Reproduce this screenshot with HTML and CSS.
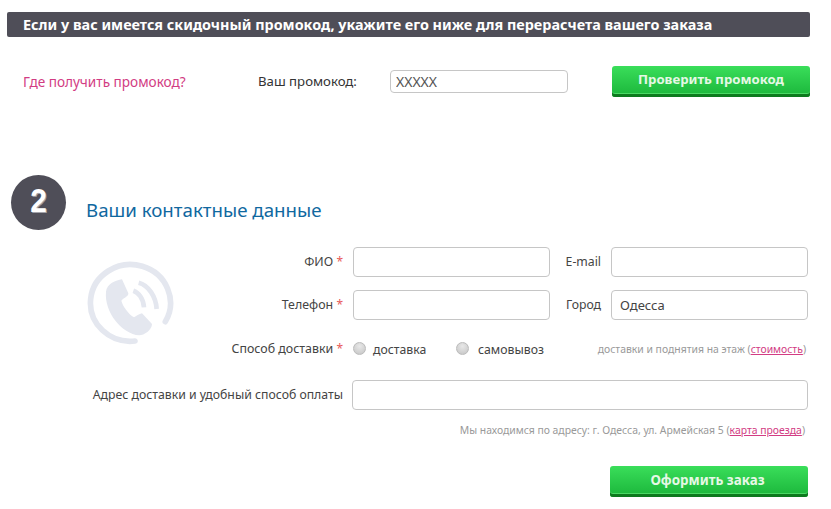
FILE: index.html
```html
<!DOCTYPE html>
<html lang="ru">
<head>
<meta charset="utf-8">
<title>Заказ</title>
<link rel="stylesheet" href="styles.css">
</head>
<body>
<main class="page">
  <h2 class="bar">Если у вас имеется скидочный промокод, укажите его ниже для перерасчета вашего заказа</h2>
  <div class="promo">
    <a class="promo-link" href="#">Где получить промокод?</a>
    <label class="promo-label">Ваш промокод:</label>
    <input class="field promo-input" value="XXXXX">
    <button class="btn promo-btn" type="button">Проверить промокод</button>
  </div>
  <div class="step-head">
    <div class="step-num"><span class="step-shadow">2</span><span class="step-digit">2</span></div>
    <h3 class="step-title">Ваши контактные данные</h3>
  </div>
  <form class="grid">
    <svg class="phone" width="100" height="90" viewBox="0 0 300 270">
      <path class="ring" d="M165 243A120 115 0 1 1 256 185"/>
      <path class="handset" d="M78 95C80 72 108 60 126 58L145 100C146 110 130 114 124 122C128 138 145 162 162 172C168 168 178 162 186 160L216 192C216 210 192 226 178 226C125 222 72 155 78 95Z"/>
      <path class="wave" d="M160 92C175 97 190 115 192 142"/>
      <path class="wave" d="M176 68C205 75 228 110 230 147"/>
    </svg>
    <label class="lbl lbl-main r1">ФИО <i>*</i></label>
    <input class="field f-left r1">
    <label class="lbl lbl-side r1">E-mail</label>
    <input class="field f-right r1">
    <label class="lbl lbl-main r2">Телефон <i>*</i></label>
    <input class="field f-left r2">
    <label class="lbl lbl-side r2">Город</label>
    <input class="field f-right r2" value="Одесса">
    <label class="lbl lbl-main r3">Способ доставки <i>*</i></label>
    <div class="delivery r3">
      <span class="radio"></span><span class="opt opt-a">доставка</span>
      <span class="radio"></span><span class="opt opt-b">самовывоз</span>
      <span class="note note-end">доставки и поднятия на этаж (<a href="#">стоимость</a>)</span>
    </div>
    <label class="lbl lbl-wide r4">Адрес доставки и удобный способ оплаты</label>
    <input class="field f-wide r4">
    <p class="note note-row r5">Мы находимся по адресу: г. Одесса, ул. Армейская 5 (<a href="#">карта проезда</a>)</p>
    <div class="submit-row r6"><button class="btn submit" type="button">Оформить заказ</button></div>
  </form>
</main>
</body>
</html>
```
FILE: styles.css
```css
* { box-sizing: border-box; }
html, body { margin: 0; padding: 0; background: #fff; }
body { font-family: "Noto Sans", "DejaVu Sans", sans-serif; font-size: 13px; color: #333; }
.page { width: 831px; height: 509px; overflow: hidden; padding-top: 12px; }
.bar {
  margin: 0 0 0 7px; width: 803px; height: 25px; padding-left: 16px;
  background: #4f4e58; border-radius: 2px; color: #fff;
  font: 700 14.400px/25px "Noto Sans", sans-serif;
}
.promo { display: flex; align-items: center; height: 36px; margin-top: 26px; }
.promo-link { margin-left: 23px; width: 235px; color: #d23c83; text-decoration: none; font-size: 13.600px; }
.promo-label { width: 132px; font-size: 13.200px; color: #333; }
.field {
  height: 30px; padding: 0 8px; border: 1px solid #c6c6c6; border-radius: 4px;
  background: #fff; font: 13px "Noto Sans", sans-serif; color: #444; outline: none;
}
.promo-input { width: 178px; height: 23px; padding: 0 5px; font-size: 14px; color: #555; }
.btn {
  border: 0; border-radius: 3px; color: #e6f8e6; font: 700 13.200px "Noto Sans", sans-serif;
  background: linear-gradient(#3ade5a, #1ab53a);
  box-shadow: inset 0 -3px 0 #0d7a1e, inset 0 -4px 0 #4ad764;
  padding: 0 0 4px;
}
.promo-btn { width: 198px; height: 31px; margin-left: 44px; }
.step-head { display: flex; margin: 76px 0 0 11px; height: 55px; }
.step-num {
  position: relative; width: 55px; height: 55px; border-radius: 50%; background: #4f4e58;
  font: 700 34px/51px "Liberation Sans", sans-serif; text-align: center; color: #fff;
}
.step-digit { position: relative; display: inline-block; transform: scaleX(.88); }
.step-shadow { position: absolute; left: 2px; right: 0; top: 1px; color: #a3a3aa; transform: scaleX(.88); }
.step-title { margin: 21px 0 0 20px; font: 400 18.700px/27px "Noto Sans", sans-serif; color: #10689f; }
.grid {
  display: grid; margin-top: 17px;
  grid-template-columns: 225px 118px 10px 197px 51px 10px 197px;
  grid-template-rows: 43px 44px 46px 40px 26px 50px;
}
.phone { grid-column: 1; grid-row: 1 / span 3; margin: 13px 0 0 80px; }
.ring { fill: none; stroke: #e4e7ef; stroke-width: 17; stroke-linecap: round; }
.handset { fill: #e4e7ef; }
.wave { fill: none; stroke: #e4e7ef; stroke-width: 14; }
.lbl { align-self: start; text-align: right; color: #444; font-size: 12.250px; line-height: 30px; height: 30px; }
.lbl i { color: #e85a5a; font-style: normal; font-size: 12px; }
.lbl-main { grid-column: 2; white-space: nowrap; justify-self: end; font-size: 12.400px; }
.lbl-side { grid-column: 5; }
.lbl-wide { grid-column: 1 / span 2; }
.f-left { grid-column: 4; width: 197px; align-self: start; }
.f-right { grid-column: 7; width: 197px; align-self: start; }
.f-wide { grid-column: 3 / span 5; width: 456px; margin-left: 9px; align-self: start; }
.r1 { grid-row: 1; } .r2 { grid-row: 2; } .r3 { grid-row: 3; }
.r4 { grid-row: 4; } .r5 { grid-row: 5; } .r6 { grid-row: 6; }
.delivery { grid-column: 4 / span 4; display: flex; align-items: center; height: 30px; font-size: 12.250px; color: #444; }
.radio {
  width: 13px; height: 13px; border-radius: 50%; border: 1px solid #bbb; margin-top: -2px;
  background: radial-gradient(circle at 50% 30%, #e8e8e8, #c4c4c4); margin-right: 7px; flex: none;
}
.opt-a { width: 83px; }
.opt-b { margin-left: 2px; }
.note { color: #999; font-size: 10.400px; }
.note a { color: #d23c83; }
.note-end { margin-left: auto; margin-right: 2px; }
.note-row { grid-column: 1 / span 7; margin: 0; text-align: right; line-height: 20px; padding-right: 3px; }
.submit-row { grid-column: 1 / span 7; display: flex; justify-content: flex-end; padding-top: 20px; }
.submit { width: 198px; height: 31px; padding-right: 3px; font-size: 13.400px; }
```
